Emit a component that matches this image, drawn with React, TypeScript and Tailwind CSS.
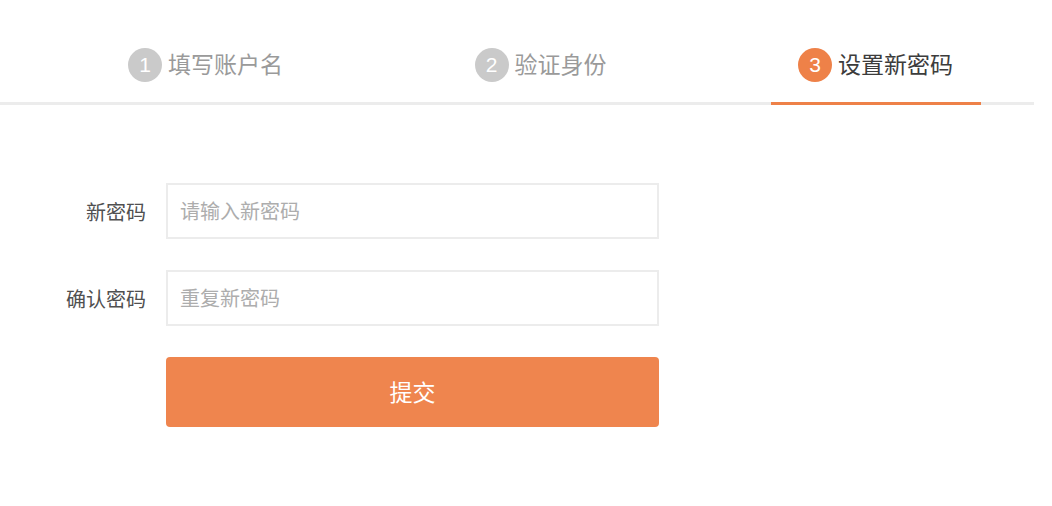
import React from "react";

const steps = [
  { n: 1, label: "填写账户名" },
  { n: 2, label: "验证身份" },
  { n: 3, label: "设置新密码" },
];

const font = { fontFamily: '"Liberation Sans", "Noto Sans CJK SC", sans-serif' };

export default function App() {
  const current = 3;
  return (
    <div className="h-[506px] w-[1052px] overflow-hidden bg-white" style={font}>
      <div className="flex w-[1034px] border-b-[3px] border-[#ececec] pl-[38px]">
        {steps.map((s) => {
          const active = s.n === current;
          return (
            <div key={s.n} className="flex w-[335px] shrink-0 justify-center">
              <div
                className={
                  "-mb-[3px] flex w-[210px] items-center justify-center gap-[6px] border-b-[3px] pt-[48px] pb-[20px] " +
                  (active ? "border-[#ee8148]" : "border-transparent")
                }
              >
                <span
                  className={
                    "flex h-[34px] w-[34px] items-center justify-center rounded-full text-[21px] text-white " +
                    (active ? "bg-[#ee8148]" : "bg-[#cacaca]")
                  }
                >
                  {s.n}
                </span>
                <span className={"text-[23px] leading-[30px] " + (active ? "text-[#3c3c3c]" : "text-[#9a9a9a]")}>
                  {s.label}
                </span>
              </div>
            </div>
          );
        })}
      </div>

      <form className="mt-[78px] flex flex-col gap-[31px]" onSubmit={(e) => e.preventDefault()}>
        <Row label="新密码" placeholder="请输入新密码" />
        <Row label="确认密码" placeholder="重复新密码" />
        <div className="flex">
          <div className="w-[166px]" />
          <button
            type="submit"
            className="h-[70px] w-[493px] rounded-[4px] bg-[#ef854e] pt-[2px] text-[23px] text-white"
          >
            提交
          </button>
        </div>
      </form>
    </div>
  );
}

function Row({ label, placeholder }: { label: string; placeholder: string }) {
  return (
    <div className="flex items-center">
      <label className="w-[146px] pt-[3px] text-right text-[20px] text-[#505050]">{label}</label>
      <div className="w-[20px]" />
      <input
        type="password"
        placeholder={placeholder}
        className="h-[56px] w-[493px] border-2 border-[#ececec] px-[12px] pt-[3px] text-[20px] text-[#333] outline-none placeholder:text-[#adadad]"
      />
    </div>
  );
}
